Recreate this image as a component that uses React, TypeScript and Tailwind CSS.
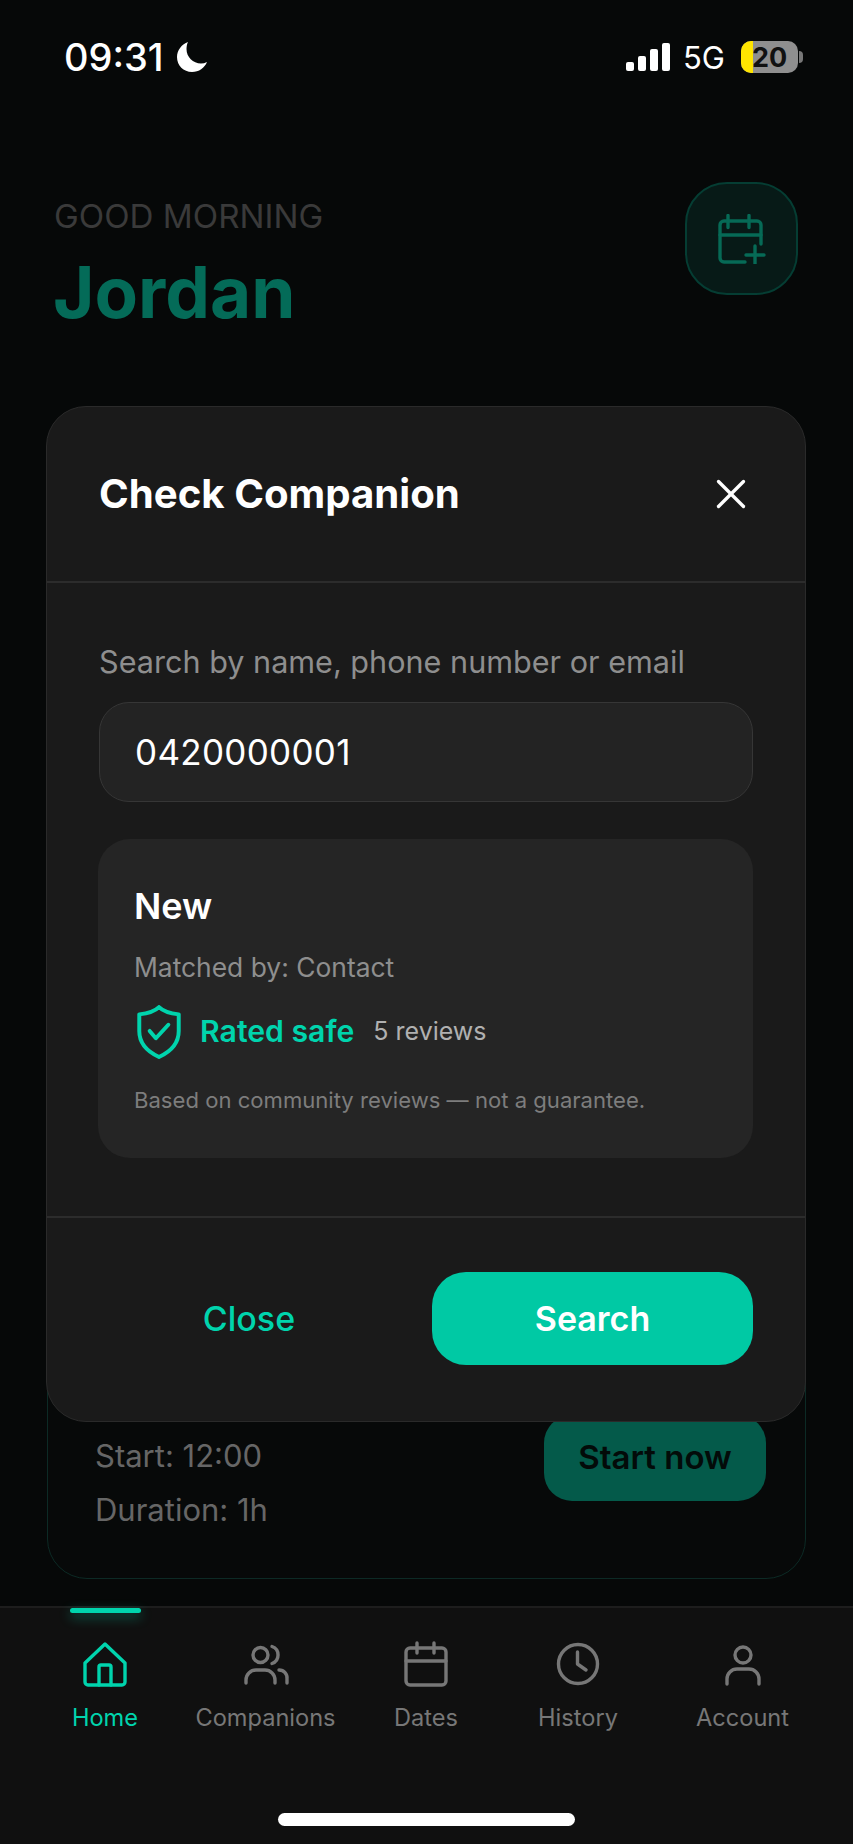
import React from 'react';
import { X } from 'lucide-react';

const tabs = [
  { label: 'Home', active: true },
  { label: 'Companions' },
  { label: 'Dates' },
  { label: 'History' },
  { label: 'Account' },
];

function TabIcon({ label }: { label: string }) {
  const common = {
    viewBox: '0 0 48 48',
    fill: 'none',
    stroke: 'currentColor',
    strokeWidth: 3.4,
    strokeLinecap: 'round' as const,
    strokeLinejoin: 'round' as const,
    className: 'w-12 h-12',
  };
  switch (label) {
    case 'Home':
      return (
        <svg {...common}>
          <path d="M24 3 L44 22 V41 a3 3 0 0 1 -3 3 H7 a3 3 0 0 1 -3 -3 V22 Z" />
          <path d="M18 44 V26 a2 2 0 0 1 2 -2 h8 a2 2 0 0 1 2 2 V44" />
        </svg>
      );
    case 'Companions':
      return (
        <svg {...common}>
          <circle cx="18.5" cy="14" r="7.5" />
          <path d="M4 42 v-3 a10 10 0 0 1 10 -10 h9 a10 10 0 0 1 10 10 v3" />
          <path d="M30 5.5 a9 9 0 0 1 0 17" />
          <path d="M37 29 a8 8 0 0 1 8 9 v4" />
        </svg>
      );
    case 'Dates':
      return (
        <svg {...common}>
          <rect x="4" y="7" width="40" height="37" rx="4" />
          <path d="M15 2 v10 M32 2 v10 M4 20 h40" />
        </svg>
      );
    case 'History':
      return (
        <svg {...common}>
          <circle cx="24" cy="23" r="19.5" />
          <path d="M23.5 11 v12 l8.5 6" />
        </svg>
      );
    default:
      return (
        <svg {...common}>
          <circle cx="24" cy="14" r="8" />
          <path d="M8 43 v-5 a10 10 0 0 1 10 -10 h12 a10 10 0 0 1 10 10 v5" />
        </svg>
      );
  }
}

export default function App() {
  return (
    <div className="relative w-[853px] h-[1844px] overflow-hidden bg-[#060808] flex flex-col font-['Inter',sans-serif]">
      {/* Status bar */}
      <div className="h-[114px] pl-[64px] pr-[50px] flex items-center justify-between text-white">
        <div className="flex items-center gap-[13px]">
          <span className="text-[38px] leading-none font-medium">09:31</span>
          <svg viewBox="0 0 30 30" className="w-[30px] h-[30px]" fill="currentColor">
            <path d="M11 0 C5 2 0 8 0 15 C0 23.5 6.5 30 15 30 C22 30 27.5 26 30 20 C28 21 26 21.5 24 21.5 C16 21.5 9.5 15 9.5 7 C9.5 4.5 10 2 11 0 Z" />
          </svg>
        </div>
        <div className="flex items-center">
          <div className="flex items-end gap-[4px] h-[28px]">
            <div className="w-[8px] h-[9px] rounded-[2px] bg-white" />
            <div className="w-[8px] h-[15px] rounded-[2px] bg-white" />
            <div className="w-[8px] h-[22px] rounded-[2px] bg-white" />
            <div className="w-[8px] h-[28px] rounded-[2px] bg-white" />
          </div>
          <span className="ml-[13px] text-[31px] leading-none">5G</span>
          <div className="ml-[16px] relative w-[57px] h-[32px] rounded-[10px] overflow-hidden bg-[#8f8f8f] flex items-center justify-center">
            <div className="absolute left-0 top-0 bottom-0 w-[12px] bg-[#ffe500]" />
            <span className="relative text-[27px] leading-none font-bold text-[#111]">20</span>
          </div>
          <div className="ml-[1px] w-[4px] h-[12px] rounded-r-full bg-[#777]" />
        </div>
      </div>

      {/* Home content, dimmed behind the dialog */}
      <div className="flex-1 flex flex-col px-[47px] pb-[27px]">
        <div className="flex items-start justify-between mt-[68px]">
          <div className="ml-[7px] pt-[16px]">
            <div className="text-[33.2px] leading-[36px] text-[#3a3a3a]">GOOD MORNING</div>
            <div className="-ml-[1px] mt-[18px] text-[71px] leading-[80px] font-bold text-[#046b58]">Jordan</div>
          </div>
          <div className="mr-[8px] w-[113px] h-[113px] rounded-[42px] border-2 border-[#053d33] bg-[#071a17] flex items-center justify-center text-[#066a56]">
            <svg viewBox="0 0 48 50" className="w-[48px] h-[50px]" fill="none" stroke="currentColor" strokeWidth="3.4" strokeLinecap="round" strokeLinejoin="round">
              <path d="M43 30 V11 a4 4 0 0 0 -4 -4 H6 a4 4 0 0 0 -4 4 V44 a4 4 0 0 0 4 4 H27" />
              <path d="M10 1.5 v12 M31 1.5 v12 M2 21 h41 M37 32 v18 M28 41 h18" />
            </svg>
          </div>
        </div>

        <div className="mt-auto h-[260px] rounded-[40px] border border-[#0c2a25] bg-[#070909] flex items-end justify-between pl-[47px] pr-[39px] pb-[41px]">
          <div className="text-[31px] leading-[54px] text-[#666666]">
            <div>Start: 12:00</div>
            <div>Duration: 1h</div>
          </div>
          <div className="mb-[36px] w-[222px] h-[86px] rounded-[28px] bg-[#045a4a] flex items-center justify-center text-[33px] font-semibold text-[#030b09]">
            Start now
          </div>
        </div>
      </div>

      {/* Bottom nav */}
      <div className="relative h-[238px] bg-[#101010] border-t-2 border-[#1d1d1d] pl-[25px] pt-[33px]">
        <div className="absolute left-[70px] top-0 w-[71px] h-[5px] rounded-full bg-[#00d4ad] shadow-[0_4px_12px_rgba(0,212,173,0.45)]" />
        <div className="grid grid-cols-[160px_161px_160px_144px_185px]">
          {tabs.map((tab) => (
            <div key={tab.label} className={`flex flex-col items-center ${tab.active ? 'text-[#00d4ad]' : 'text-[#777777]'}`}>
              <TabIcon label={tab.label} />
              <span className="mt-[14px] text-[23.6px] leading-[30px]">{tab.label}</span>
            </div>
          ))}
        </div>
        <div className="absolute left-[278px] bottom-[18px] w-[297px] h-[13px] rounded-full bg-white" />
      </div>

      {/* Dialog */}
      <div className="absolute left-[46px] top-[406px] w-[760px] h-[1016px] rounded-[40px] border border-[#2a2a2a] bg-[#1a1a1a] flex flex-col">
        <div className="h-[176px] pl-[52px] pr-[49px] border-b-2 border-[#2c2c2c] flex items-center justify-between">
          <span className="text-[40.2px] font-bold text-white">Check Companion</span>
          <X className="w-[50px] h-[50px] text-white" strokeWidth={1.6} />
        </div>
        <div className="flex-1 px-[52px]">
          <div className="mt-[59px] text-[30.6px] leading-[40px] text-[#8e8e8e]">Search by name, phone number or email</div>
          <div className="mt-[20px] h-[100px] rounded-[30px] border border-[#363636] bg-[#232323] pl-[35px] flex items-center text-[35px] tracking-[0.3px] text-white">
            0420000001
          </div>
          <div className="mt-[37px] -ml-[1px] h-[319px] rounded-[32px] bg-[#252525] pl-[36px] pr-[35px] pt-[43px]">
            <div className="text-[36px] leading-[48px] font-semibold text-white">New</div>
            <div className="mt-[19px] text-[26.4px] leading-[36px] text-[#8e8e8e]">Matched by: Contact</div>
            <div className="mt-[20px] flex items-center">
              <svg viewBox="0 0 42 52" className="ml-[3px] w-[44px] h-[54px] text-[#00d4ad]" fill="none" stroke="currentColor" strokeWidth="3.8" strokeLinecap="round" strokeLinejoin="round">
                <path d="M21 2 C25 6 31 8 40 9 V25 C40 37 32 45 21 50 C10 45 2 37 2 25 V9 C11 8 17 6 21 2 Z" />
                <path d="M12 25 L18 32 L30 19" />
              </svg>
              <span className="ml-[19px] text-[30.2px] font-semibold text-[#00d4ad]">Rated safe</span>
              <span className="ml-[19px] text-[25px] text-[#b0b0b0]">5 reviews</span>
            </div>
            <div className="mt-[25px] text-[22.1px] leading-[32px] text-[#7d7d7d]">Based on community reviews — not a guarantee.</div>
          </div>
        </div>
        <div className="h-[205px] border-t-2 border-[#2c2c2c] pl-[52px] pr-[52px] pb-[2px] flex items-center justify-between">
          <div className="w-[300px] text-center text-[34px] font-medium text-[#00d4ad]">Close</div>
          <div className="w-[321px] h-[93px] rounded-[34px] bg-[#00c9a4] flex items-center justify-center text-[34px] font-semibold text-white">
            Search
          </div>
        </div>
      </div>
    </div>
  );
}
